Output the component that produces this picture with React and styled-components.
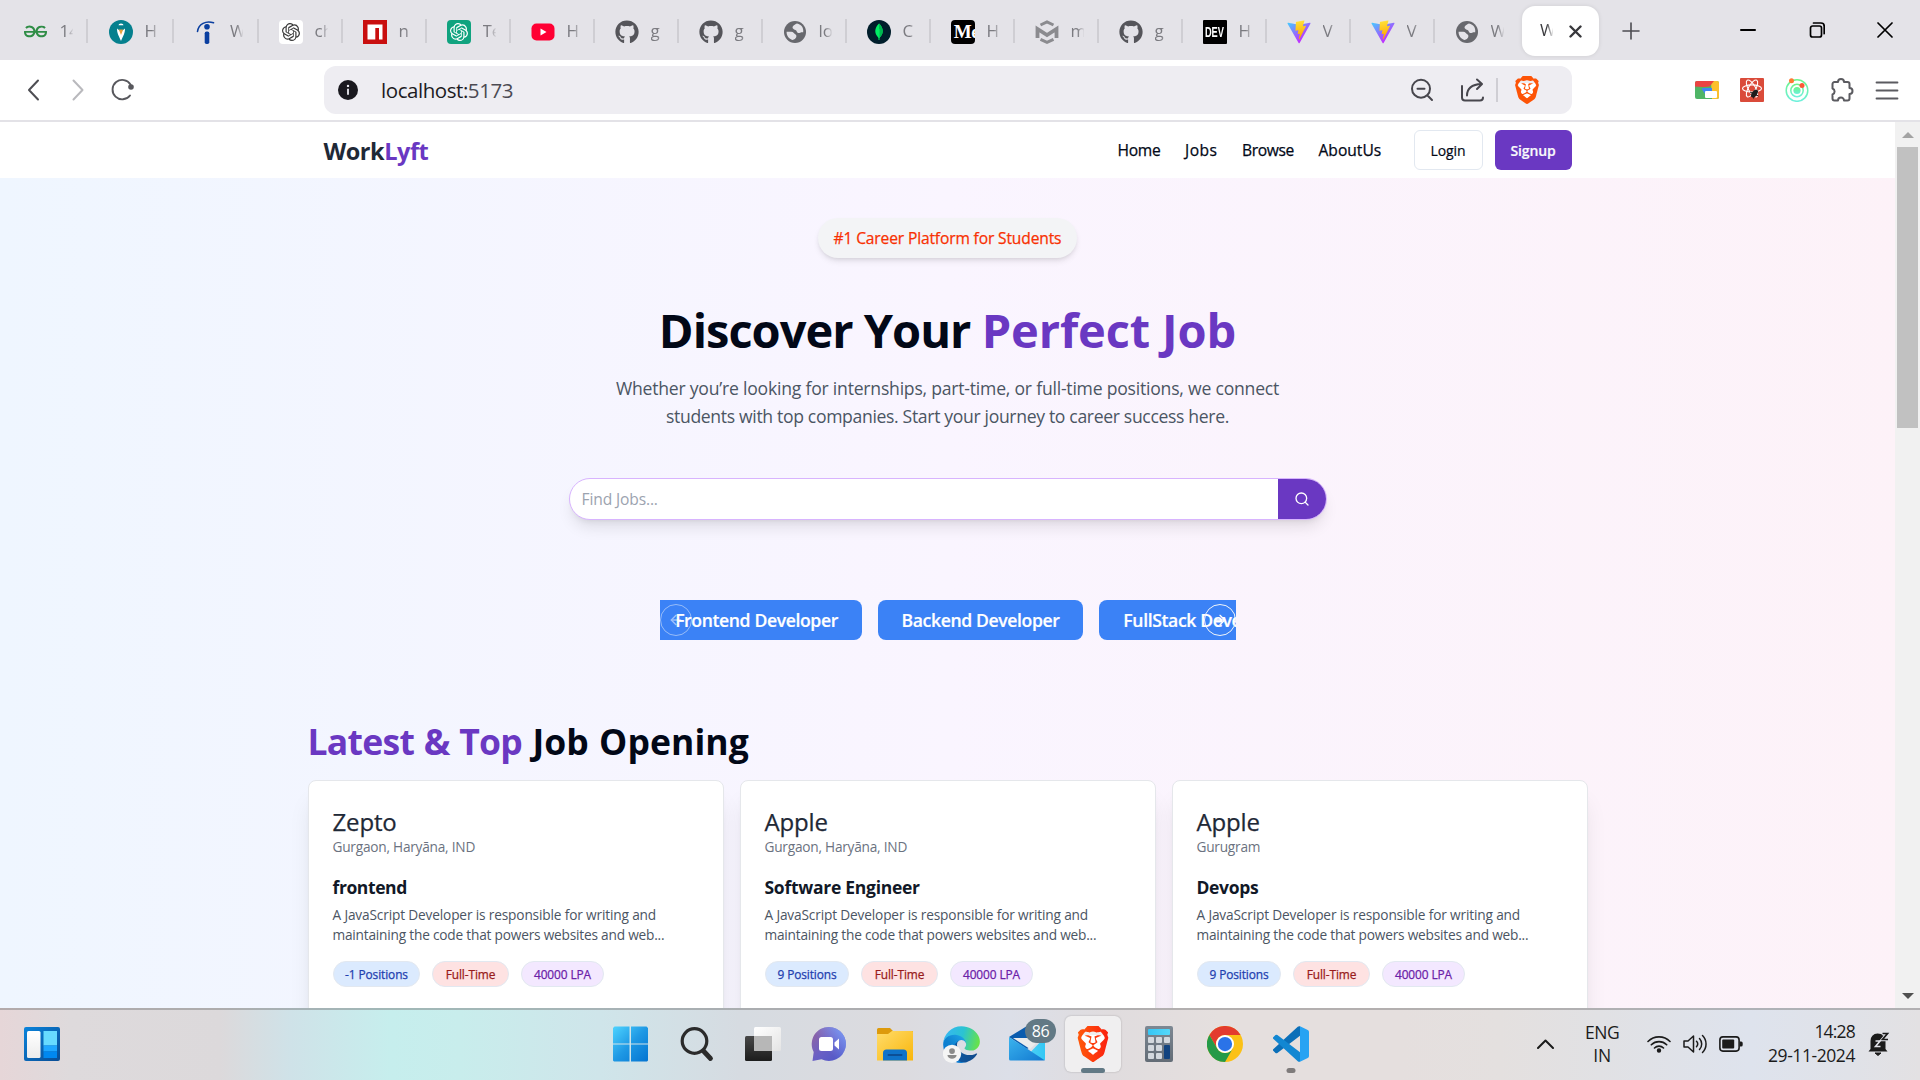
import React from 'react';
import styled, { createGlobalStyle } from 'styled-components';
import { SiGeeksforgeeks, SiOpenai, SiBrave } from 'react-icons/si';
import { FaGithub } from 'react-icons/fa6';
import { Search, ArrowLeft, ArrowRight } from 'lucide-react';

const PURPLE = '#6a38c2';

const GlobalStyle = createGlobalStyle`
  *, *::before, *::after { box-sizing: border-box; }
  html, body { margin: 0; padding: 0; overflow: hidden; }
  body { font-family: 'Open Sans', 'Noto Sans', sans-serif; color: #020817; }
  h1, h2, h3, p { margin: 0; font-weight: inherit; }
  button { font-family: inherit; padding: 0; margin: 0; cursor: pointer; }
  svg { display: block; flex: none; }
`;

const Screen = styled.div`
  width: 1920px;
  height: 1080px;
  display: flex;
  flex-direction: column;
  overflow: hidden;
  background: #fff;
`;

/* ---------- browser chrome ---------- */

const TabStrip = styled.div`
  height: 60px;
  flex: none;
  display: flex;
  align-items: flex-start;
  padding: 6px 0 0 4px;
  background: #e4e3e8;
`;

const Tab = styled.div`
  width: ${(p) => p.$w || 84}px;
  height: 51px;
  flex: none;
  display: flex;
  align-items: center;
  padding-left: ${(p) => (p.$w ? 20.5 : 19.5)}px;
`;

const TabIcon = styled.div`
  width: 24px;
  height: 24px;
  display: flex;
  align-items: center;
  justify-content: center;
  flex: none;
  overflow: hidden;
  white-space: nowrap;
  border-radius: ${(p) => p.$radius || 0}px;
  background: ${(p) => p.$bg || 'transparent'};
  color: ${(p) => p.$color || '#55555a'};
`;

const TabLabel = styled.span`
  width: 13px;
  margin-left: 12px;
  padding-bottom: 2px;
  overflow: hidden;
  white-space: nowrap;
  font-size: 17px;
  line-height: 24px;
  font-weight: 400;
  color: ${(p) => (p.$active ? '#3c3c40' : '#7b7b80')};
  mask-image: linear-gradient(to right, #000 50%, transparent 105%);
`;

const TabDivider = styled.span`
  width: 2px;
  height: 24px;
  margin-left: auto;
  margin-bottom: 2px;
  background: #cfced3;
`;

const ActiveTab = styled.div`
  width: 77px;
  height: 50px;
  flex: none;
  margin-left: 3px;
  padding: 0 17px 0 6px;
  display: flex;
  align-items: center;
  justify-content: space-between;
  background: #fff;
  border-radius: 13px;
  box-shadow: 0 0 4px rgba(0, 0, 0, 0.1);
`;

const MediumMark = styled.span`
  font: 700 19px/24px 'Liberation Serif', serif;
  letter-spacing: -0.5px;
  margin-left: 8px;
`;

const DevMark = styled.span`
  font: 700 14px/24px 'Liberation Sans', sans-serif;
  transform: scaleX(0.66);
`;

const WindowControls = styled.div`
  display: flex;
  align-items: center;
  height: 48px;
  margin-left: auto;
  padding-right: 27px;
  gap: 52.5px;
`;

const NewTab = styled.div`
  margin: 14px 0 0 21px;
  padding: 2px;
`;

const Toolbar = styled.div`
  height: 62px;
  flex: none;
  display: flex;
  align-items: center;
  background: #fff;
  border-bottom: 2px solid #e3e2e7;
`;

const NavButtons = styled.div`
  width: 324px;
  display: flex;
  align-items: center;
  padding-left: 22px;
  gap: 20px;
`;

const AddressBar = styled.div`
  width: 1248px;
  height: 48px;
  display: flex;
  align-items: center;
  padding: 0 31px 0 14px;
  border-radius: 12px;
  background: #eeedf2;
`;

const Address = styled.span`
  margin-left: 23px;
  padding-bottom: 1px;
  font-size: 20.5px;
  line-height: 28px;
  letter-spacing: -0.44px;
  color: #1c1b22;

  span { color: #4b4a52; }
`;

const AddressActions = styled.div`
  margin-left: auto;
  display: flex;
  align-items: center;
`;

const AddressDivider = styled.span`
  width: 2px;
  height: 24px;
  margin: 0 15px 0 12px;
  background: #cfced4;
`;

const ShareSlot = styled.div`
  margin-left: 26px;
`;

const Extensions = styled.div`
  margin-left: auto;
  padding-right: 21px;
  display: flex;
  align-items: center;
  gap: 21px;
`;

/* ---------- page ---------- */

const Viewport = styled.div`
  height: 886px;
  flex: none;
  display: flex;
  overflow: hidden;
`;

const Page = styled.div`
  width: 1895px;
  height: 886px;
  overflow: hidden;
  background: linear-gradient(to right, #eff6ff, #faf5ff, #fdf2f8);
`;

const Scrollbar = styled.div`
  width: 25px;
  display: flex;
  flex-direction: column;
  align-items: center;
  padding: 10px 0 9px;
  background: #f1f1f1;
`;

const Thumb = styled.div`
  width: 21px;
  height: 281px;
  margin: 9px 0 auto;
  background: #c1c1c1;
`;

const Header = styled.header`
  height: 56px;
  background: #fff;
`;

const HeaderInner = styled.div`
  width: 1248px;
  height: 56px;
  margin: 0 auto;
  display: flex;
  align-items: center;
`;

const Logo = styled.div`
  padding-top: 2px;
  font-size: 23.5px;
  line-height: 32px;
  font-weight: 700;
  letter-spacing: -0.46px;
  color: #1f2937;
`;

const Accent = styled.span`
  color: ${PURPLE};
  letter-spacing: ${(p) => (p.$ls === undefined ? 'inherit' : `${p.$ls}px`)};
`;

const Menu = styled.nav`
  margin-left: auto;
  display: flex;
  gap: 24px;
  font-size: 15.6px;
  line-height: 24px;
  font-weight: 500;
  -webkit-text-stroke: 0.25px currentColor;
`;

const MenuItem = styled.span`
  width: ${(p) => p.$w}px;
  white-space: nowrap;
  letter-spacing: ${(p) => p.$ls || 0}px;
`;

const AuthButton = styled.button`
  height: 40px;
  width: ${(p) => (p.$primary ? 77 : 69)}px;
  margin-left: ${(p) => (p.$primary ? 12 : 32)}px;
  border-radius: 6px;
  border: ${(p) => (p.$primary ? 'none' : '1px solid #e2e8f0')};
  background: ${(p) => (p.$primary ? PURPLE : '#fff')};
  color: ${(p) => (p.$primary ? '#f8fafc' : '#020817')};
  font-size: 14px;
  font-weight: ${(p) => (p.$primary ? 600 : 500)};
  letter-spacing: -0.12px;
  -webkit-text-stroke: 0.2px currentColor;
`;

const Hero = styled.section`
  display: flex;
  flex-direction: column;
  align-items: center;
  padding-top: 40px;
`;

const Badge = styled.span`
  width: 259px;
  height: 40px;
  border-radius: 20px;
  background: #f3f4f6;
  color: #f83002;
  font-size: 15.6px;
  line-height: 41px;
  font-weight: 500;
  letter-spacing: -0.15px;
  -webkit-text-stroke: 0.25px currentColor;
  text-align: center;
  box-shadow: 0 4px 6px -1px rgba(0, 0, 0, 0.1), 0 2px 4px -2px rgba(0, 0, 0, 0.1);
`;

const HeroTitle = styled.h1`
  margin-top: 48px;
  font-size: 47px;
  line-height: 48px;
  font-weight: 700;
  letter-spacing: -0.99px;
`;

const HeroText = styled.p`
  margin-top: 20px;
  display: flex;
  flex-direction: column;
  align-items: center;
  font-size: 17.6px;
  line-height: 28px;
  color: #4b5563;
`;

const Line = styled.span`
  white-space: nowrap;
  letter-spacing: ${(p) => p.$ls}px;
`;

const SearchBar = styled.div`
  width: 758px;
  height: 42px;
  margin-top: 48px;
  display: flex;
  align-items: stretch;
  overflow: hidden;
  border: 1px solid #d8b4fe;
  border-radius: 21px;
  background: #fff;
  box-shadow: 0 10px 15px -3px rgba(0, 0, 0, 0.1), 0 4px 6px -4px rgba(0, 0, 0, 0.1);
`;

const Placeholder = styled.span`
  flex: 1;
  padding-left: 12px;
  font-size: 15.6px;
  line-height: 41px;
  letter-spacing: -0.14px;
  color: #9ca3af;
`;

const SearchButton = styled.button`
  width: 48px;
  display: flex;
  align-items: center;
  justify-content: center;
  border: 0;
  background: ${PURPLE};
  color: #fff;
`;

const Carousel = styled.div`
  position: relative;
  width: 576px;
  height: 40px;
  margin-top: 80px;
  overflow: hidden;
`;

const CarouselTrack = styled.div`
  display: flex;
  gap: 16px;
  margin-left: -9px;
`;

const Category = styled.button`
  width: ${(p) => p.$w}px;
  height: 40px;
  flex: none;
  padding: 0 0 1px 1px;
  border: 0;
  border-radius: 8px;
  background: #3b82f6;
  color: #fff;
  font-size: 17.6px;
  font-weight: 600;
  letter-spacing: -0.38px;
  -webkit-text-stroke: 0.2px currentColor;
  white-space: nowrap;
`;

const CarouselArrow = styled.button`
  position: absolute;
  top: 4px;
  ${(p) => p.$side}: 0;
  width: 32px;
  height: 32px;
  display: flex;
  align-items: center;
  justify-content: center;
  border: 1px solid #f1f5f9;
  border-radius: 50%;
  background: transparent;
  color: #fff;
  opacity: ${(p) => (p.$disabled ? 0.5 : 1)};
`;

const Jobs = styled.section`
  width: 1280px;
  margin: 81px auto 0;
`;

const JobsTitle = styled.h2`
  font-size: 35.5px;
  line-height: 40px;
  font-weight: 700;
  letter-spacing: 0.07px;
  word-spacing: 1px;
`;

const JobGrid = styled.div`
  display: grid;
  grid-template-columns: repeat(3, 1fr);
  gap: 16px;
  margin-top: 19px;
`;

const Card = styled.article`
  height: 270px;
  padding: 25px 24px;
  border: 1px solid #e5e7eb;
  border-radius: 8px;
  background: #fff;
  box-shadow: 0 20px 25px -5px rgba(0, 0, 0, 0.1), 0 8px 10px -6px rgba(0, 0, 0, 0.1);
`;

const Company = styled.h3`
  font-size: 24px;
  line-height: 32px;
  font-weight: 500;
  letter-spacing: -0.15px;
  color: #1f2937;
  -webkit-text-stroke: 0.25px currentColor;
`;

const Place = styled.p`
  font-size: 13.7px;
  line-height: 18px;
  letter-spacing: -0.24px;
  color: #6b7280;
`;

const Role = styled.h3`
  margin-top: 17px;
  font-size: 17.5px;
  line-height: 28px;
  font-weight: 700;
  letter-spacing: ${(p) => p.$ls}px;
  color: #111827;
`;

const Summary = styled.p`
  margin-top: 4px;
  display: flex;
  flex-direction: column;
  font-size: 13.7px;
  line-height: 20px;
  color: #4b5563;
`;

const Tags = styled.div`
  display: flex;
  gap: 12px;
  margin-top: 16px;
`;

const tones = {
  blue: ['#dbeafe', '#1e40af'],
  red: ['#fee2e2', '#991b1b'],
  purple: ['#f3e8ff', '#6b21a8'],
};

const Tag = styled.span`
  width: ${(p) => p.$w}px;
  height: 26px;
  padding-left: 1px;
  border: 1px solid #e2e8f0;
  border-radius: 13px;
  background: ${(p) => tones[p.$tone][0]};
  color: ${(p) => tones[p.$tone][1]};
  font-size: 11.9px;
  line-height: 25px;
  font-weight: 500;
  letter-spacing: -0.1px;
  -webkit-text-stroke: 0.25px currentColor;
  text-align: center;
  white-space: nowrap;
`;

/* ---------- taskbar ---------- */

const Taskbar = styled.div`
  height: 72px;
  flex: none;
  display: flex;
  align-items: center;
  border-top: 2px solid rgba(110, 110, 110, 0.42);
  background: linear-gradient(
    to right,
    #e6d6d8 0, #dedadc 70px, #dcd9db 220px, #cfe2e8 290px, #c6eeed 390px, #c8edec 460px,
    #cfe5ea 600px, #d6dbe1 740px, #dcdbdf 900px, #dcdfe8 1010px, #e0dcde 1110px, #e5dfde 1220px,
    #e5dfde 1400px, #e4e0df 1500px, #e1e1e4 1600px, #dee3ed 1750px, #e0e2e8 1850px, #e3e1e3 1920px
  );
  background-clip: border-box;
`;

const WidgetArea = styled.div`
  width: 598px;
  padding: 0 0 2px 24px;
`;

const AppSlot = styled.div`
  position: relative;
  width: 66px;
  height: 70px;
  padding-bottom: 2px;
  display: flex;
  align-items: center;
  justify-content: center;
  flex: none;
`;

const AppTile = styled.div`
  width: 56px;
  height: 56px;
  display: flex;
  align-items: center;
  justify-content: center;
  border-radius: 6px;
  background: #f0eff0;
  box-shadow: 0 0 2px rgba(0, 0, 0, 0.25);
`;

const Running = styled.span`
  position: absolute;
  bottom: 7px;
  left: 50%;
  width: ${(p) => p.$w}px;
  height: 5px;
  border-radius: 3px;
  transform: translateX(-50%);
  background: ${(p) => p.$color};
`;

const Count = styled.span`
  position: absolute;
  top: 9px;
  left: 31px;
  width: 31px;
  height: 24px;
  border-radius: 12px;
  background: #627985;
  color: #fff;
  font-size: 16px;
  line-height: 24px;
  letter-spacing: -0.3px;
  text-align: center;
`;

const Tray = styled.div`
  flex: 1;
  display: flex;
  align-items: center;
  padding: 0 30px 2px 0;
  color: #1b1b1b;
`;

const TrayStack = styled.div`
  display: flex;
  flex-direction: column;
  align-items: ${(p) => p.$align || 'center'};
  padding-bottom: ${(p) => (p.$align ? 2 : 0)}px;
  font-size: 17.5px;
  line-height: ${(p) => (p.$align ? 24 : 23)}px;
  white-space: nowrap;
`;

const Status = styled.div`
  display: flex;
  gap: 12px;
  align-items: center;
  margin-left: 28px;
`;

const Spacer = styled.span`
  width: ${(p) => p.$w}px;
  flex: none;
`;

const Push = styled.span`
  margin-left: auto;
`;

/* ---------- icons ---------- */

const Globe = () => (
  <svg width="24" height="24" viewBox="0 0 24 24">
    <circle cx="12" cy="12" r="11" fill="#67686d" />
    <path d="M14 3.600C10.500 5 8.800 7 10 8.600c1 1.400 2.400 1 3.200 1.900.9 1 .5 2.200 2 2.400 1.600.2 2.400-1 5-.7C20.800 8 18.500 4.600 14 3.600Z" fill="#e4e3e8" />
    <path d="M3.600 11.800h4.600c2.400 0 2.600 1.900 4 2.500 2.300 1 1.200 4.900-2.600 5.800C6 19 3.400 15.800 3.600 11.800Z" fill="#e4e3e8" />
  </svg>
);

const Pen = () => (
  <svg width="24" height="24" viewBox="0 0 24 24">
    <circle cx="12" cy="12" r="12" fill="#05808e" />
    <path d="M9.500 5.200a2.500 1.800 0 0 1 5 0z" fill="#fff" />
    <path d="M8 8.500c0 5 1.500 6.500 4 12.500 2.500-6 4-7.500 4-12.500l-2.500 2h-3z" fill="#fff" />
    <path d="M9.800 9.500h4.400L12 15z" fill="#e8a33d" />
  </svg>
);

const Indeed = () => (
  <svg width="24" height="24" viewBox="0 0 24 24">
    <path d="M3.500 11.500C4.500 4 12 .2 19.500 2.800" fill="none" stroke="#0a3fa0" strokeWidth="1.600" strokeLinecap="round" />
    <circle cx="13" cy="6.800" r="2.800" fill="#0a3fa0" />
    <rect x="10.700" y="11.500" width="4.600" height="12.500" rx="1.800" fill="#0a3fa0" />
  </svg>
);

const Npm = () => (
  <svg width="24" height="24" viewBox="0 0 24 24">
    <rect width="24" height="24" fill="#c90f0f" />
    <path d="M4.500 4.500h15v15H16V8h-3.700v11.500H4.500z" fill="#fff" />
  </svg>
);

const YouTube = () => (
  <svg width="24" height="24" viewBox="0 0 24 24">
    <rect x="0.500" y="3.500" width="23" height="17" rx="5" fill="#ff0033" />
    <path d="M9.500 8.500v7l6-3.500z" fill="#fff" />
  </svg>
);

const Mongo = () => (
  <svg width="24" height="24" viewBox="0 0 24 24">
    <circle cx="12" cy="12" r="12" fill="#001e2b" />
    <path d="M12 3.500c5 4.800 5 10.500 0 14.700C7 14 7 8.300 12 3.500Z" fill="#00ed64" />
    <path d="M12 3.500c5 4.800 5 10.500 0 14.700z" fill="#00b850" />
    <path d="M12 9v11" stroke="#00ed64" strokeWidth="1" />
  </svg>
);

const CubeM = () => (
  <svg width="24" height="24" viewBox="0 0 24 24" fill="none" stroke="#8b8b8f" strokeWidth="3.800">
    <path d="M2.500 18V9l9.500 6 9.500-6v9" />
    <path d="M5.500 5 12 2l6.500 3M5.500 19.300l6.500 3 6.500-3" strokeWidth="3" />
  </svg>
);

const Vite = () => (
  <svg width="24" height="24" viewBox="0 0 410 404">
    <defs>
      <linearGradient id="viteA" x1="6" y1="33" x2="235" y2="344" gradientUnits="userSpaceOnUse">
        <stop stopColor="#41d1ff" /><stop offset="1" stopColor="#bd34fe" />
      </linearGradient>
      <linearGradient id="viteB" x1="194.600" y1="8.800" x2="236" y2="293" gradientUnits="userSpaceOnUse">
        <stop stopColor="#ffea83" /><stop offset=".083" stopColor="#ffdd35" /><stop offset="1" stopColor="#ffa800" />
      </linearGradient>
    </defs>
    <path fill="url(#viteA)" d="M399.641 59.525L215.643 388.545c-3.800 6.793-13.560 6.833-17.415.073L10.582 59.556C6.381 52.190 12.680 43.267 21.028 44.759l184.195 32.923c1.175.21 2.378.208 3.553-.006L389.119 44.806c8.320-1.517 14.649 7.337 10.522 14.719Z" />
    <path fill="url(#viteB)" d="M292.965 1.574L156.801 28.255a5 5 0 0 0-4.030 4.611l-8.376 141.464a5 5 0 0 0 6.115 5.168l37.910-8.749a5 5 0 0 1 6.023 5.873l-11.263 55.153a5 5 0 0 0 6.352 5.785l23.415-7.114a5 5 0 0 1 6.350 5.796l-17.899 86.633c-1.120 5.419 6.088 8.374 9.094 3.728l2.008-3.103L323.454 102.072a5 5 0 0 0-5.418-7.149l-39.022 7.531a5 5 0 0 1-5.752-6.296l25.469-88.291a5 5 0 0 0-5.766-6.293Z" />
  </svg>
);

const Stroke = ({ w, h, d, color = '#55555a', width = 2 }) => (
  <svg width={w} height={h} viewBox={`0 0 ${w} ${h}`} fill="none" stroke={color} strokeWidth={width} strokeLinecap="round" strokeLinejoin="round">
    <path d={d} />
  </svg>
);

const Reload = () => (
  <svg width="24" height="24" viewBox="0 0 24 24">
    <path d="M20.500 6.500A9.700 9.700 0 1 0 20 17.500" fill="none" stroke="#58585d" strokeWidth="1.900" strokeLinecap="round" />
    <circle cx="21" cy="9" r="2.800" fill="#58585d" />
  </svg>
);

const Info = () => (
  <svg width="20" height="20" viewBox="0 0 20 20">
    <circle cx="10" cy="10" r="10" fill="#1a191f" />
    <path d="M10 8.800v6" stroke="#eeedf2" strokeWidth="1.800" />
    <circle cx="10" cy="5.900" r="1.200" fill="#eeedf2" />
  </svg>
);

const BraveLogo = ({ size, id, from, to }) => (
  <svg width={size} height={size} viewBox="0 0 24 24">
    <defs>
      <linearGradient id={id}><stop stopColor={from} /><stop offset="1" stopColor={to} /></linearGradient>
    </defs>
    <path d="M4.500 6h15l-1.500 11-6 4.500L6 17z" fill="#fff" />
    <SiBrave x="0" y="0" size={24} fill={`url(#${id})`} />
  </svg>
);

const ColorSheet = () => (
  <svg width="24" height="18" viewBox="0 0 24 18">
    <rect width="24" height="18" rx="2" fill="#4fb566" />
    <path d="M16 0h6a2 2 0 0 1 2 2v14a2 2 0 0 1-2 2h-5z" fill="#fbc02d" />
    <path d="M6 7h11v6H10z" fill="#4285f4" />
    <path d="M2 0h17l-4.500 5.500L0 7V2a2 2 0 0 1 2-2z" fill="#eb4343" />
    <path d="M0 5.500V7l5 5 3-6z" fill="#4fb566" opacity=".9" />
    <rect x="10" y="10" width="12" height="7" rx="1" fill="#fff" />
  </svg>
);

const ReactBug = () => (
  <svg width="24" height="24" viewBox="0 0 24 24">
    <rect width="24" height="24" rx="1" fill="#da4b3a" />
    <g fill="none" stroke="#fff" strokeWidth="1.100">
      <ellipse cx="12" cy="10.500" rx="9.500" ry="3.600" />
      <ellipse cx="12" cy="10.500" rx="9.500" ry="3.600" transform="rotate(60 12 10.500)" />
      <ellipse cx="12" cy="10.500" rx="9.500" ry="3.600" transform="rotate(120 12 10.500)" />
    </g>
    <ellipse cx="14.500" cy="15.500" rx="2.600" ry="4.500" transform="rotate(35 14.500 15.500)" fill="#1c1c1c" />
    <path d="m10 14 8.500 4M11.500 18.500l6.500-5.500M13.500 20.500l1-7" stroke="#1c1c1c" strokeWidth="1" />
  </svg>
);

const Orbit = () => (
  <svg width="24" height="24" viewBox="0 0 24 24" fill="none" strokeWidth="1.500">
    <defs>
      <linearGradient id="orbit" x2="0" y2="1"><stop stopColor="#6cf58a" /><stop offset="1" stopColor="#6ff0dc" /></linearGradient>
    </defs>
    <circle cx="12" cy="12.500" r="10.800" stroke="url(#orbit)" />
    <circle cx="12" cy="12.500" r="6.200" stroke="url(#orbit)" />
    <circle cx="12" cy="12.500" r="3.600" fill="url(#orbit)" />
    <circle cx="6.500" cy="2.700" r="2.500" fill="#ff7a33" />
    <circle cx="17" cy="7.500" r="2.500" fill="#fb5a35" />
  </svg>
);

const Widgets = () => (
  <svg width="36" height="34" viewBox="0 0 36 34">
    <defs>
      <linearGradient id="wid" x2="1" y2="1"><stop stopColor="#0a84dc" /><stop offset="1" stopColor="#0a4c94" /></linearGradient>
      <linearGradient id="widw" x2="0" y2="1"><stop stopColor="#fff" /><stop offset="1" stopColor="#ececec" /></linearGradient>
    </defs>
    <rect width="36" height="34" rx="2" fill="url(#wid)" />
    <rect x="3" y="4" width="13.500" height="27" rx="1.500" fill="url(#widw)" />
    <rect x="19.500" y="4" width="13.500" height="14.500" fill="#67dbff" />
    <rect x="19.500" y="18.500" width="13.500" height="6" fill="#1fa7ff" />
    <rect x="19.500" y="24.500" width="13.500" height="6.500" fill="#0088f0" />
  </svg>
);

const Start = () => (
  <svg width="36" height="36" viewBox="0 0 36 36">
    <defs>
      <linearGradient id="win" gradientUnits="userSpaceOnUse" x1="0" y1="0" x2="36" y2="36">
        <stop stopColor="#4fd4ff" /><stop offset=".5" stopColor="#1e98e4" /><stop offset="1" stopColor="#0272d0" />
      </linearGradient>
    </defs>
    <path fill="url(#win)" d="M1.500 .5h15v17H0V2zM18 .5h15.500L35 2v15.500H18zM0 18.500h16.500v17H1L0 34.500zM18 18.500h17v16l-1 1H18z" />
  </svg>
);

const SearchGlass = () => (
  <svg width="34" height="36" viewBox="0 0 34 36" fill="none" stroke="#2b2b2b">
    <circle cx="14.500" cy="15" r="12.300" strokeWidth="3.200" />
    <path d="m23.500 25 7 7.500" strokeWidth="4.800" strokeLinecap="round" />
  </svg>
);

const TaskView = () => (
  <svg width="36" height="36" viewBox="0 0 36 36">
    <defs>
      <linearGradient id="tvd" x2="0" y2="1"><stop stopColor="#484848" /><stop offset="1" stopColor="#1c1c1c" /></linearGradient>
      <linearGradient id="tvl" x2="1" y2="1"><stop stopColor="#fff" /><stop offset="1" stopColor="#e4e4e4" /></linearGradient>
    </defs>
    <rect x="0" y="10" width="27" height="25" rx="1.500" fill="url(#tvd)" />
    <rect x="9" y="1" width="27" height="24" rx="1.500" fill="url(#tvl)" />
    <path d="M9 10h18v15H10.500A1.500 1.500 0 0 1 9 23.500z" fill="#b7b7b7" />
  </svg>
);

const Chat = () => (
  <svg width="36" height="36" viewBox="0 0 36 36">
    <defs>
      <linearGradient id="chat" x1="0" y1=".2" x2=".8" y2="1"><stop stopColor="#8f63a4" /><stop offset=".5" stopColor="#6a5fc4" /><stop offset="1" stopColor="#5058c8" /></linearGradient>
      <linearGradient id="chat2" x1=".4" y1=".6" x2="1" y2=".1"><stop stopColor="#7b8ff0" stopOpacity="0" /><stop offset="1" stopColor="#7ba0f8" /></linearGradient>
    </defs>
    <path d="M18 1a17 17 0 1 1-7.500 32.300L1.500 35l1.200-9A17 17 0 0 1 18 1z" fill="url(#chat)" />
    <path d="M18 1a17 17 0 1 1-7.500 32.300L1.500 35l1.200-9A17 17 0 0 1 18 1z" fill="url(#chat2)" />
    <rect x="8" y="11" width="14" height="14" rx="2.500" fill="#fff" />
    <path d="M23.500 16.500 28 12.500v11l-4.500-4z" fill="#fff" />
  </svg>
);

const Folder = () => (
  <svg width="36" height="36" viewBox="0 0 36 36">
    <defs>
      <linearGradient id="fol" x2="1" y2="1"><stop stopColor="#ffdc6b" /><stop offset="1" stopColor="#f9b60b" /></linearGradient>
    </defs>
    <path d="M1.500 2H13l3 3h20v6H0V3.500A1.500 1.500 0 0 1 1.500 2z" fill="#dd9a0c" />
    <path d="M0 8h11l4-3h20a1 1 0 0 1 1 1v28.500H0z" fill="url(#fol)" />
    <path d="M6 34.500V27a3.500 3.500 0 0 1 3.500-3.500h17A3.500 3.500 0 0 1 30 27v7.500z" fill="#0f73c9" />
    <rect x="10.500" y="28" width="15" height="2" rx="1" fill="#0c4f96" />
  </svg>
);

const Edge = () => (
  <svg width="37" height="37" viewBox="-1 -1 258 258">
    <defs>
      <linearGradient id="ed1" x1="63" y1="177" x2="241" y2="177" gradientUnits="userSpaceOnUse"><stop stopColor="#0c59a4" /><stop offset="1" stopColor="#114a8b" /></linearGradient>
      <linearGradient id="ed2" x1="157" y1="107" x2="46" y2="228" gradientUnits="userSpaceOnUse"><stop stopColor="#1b9de2" /><stop offset=".5" stopColor="#0f82d0" /><stop offset="1" stopColor="#0678d4" /></linearGradient>
      <linearGradient id="ed3" x1="20" y1="60" x2="250" y2="120" gradientUnits="userSpaceOnUse"><stop stopColor="#35b8f0" /><stop offset=".5" stopColor="#2bc3d2" /><stop offset="1" stopColor="#66e24b" /></linearGradient>
    </defs>
    <g transform="translate(-4.600 -4.900)">
      <path fill="url(#ed1)" d="M235.680 195.460a93.730 93.730 0 0 1-10.540 4.710 101.870 101.870 0 0 1-35.900 6.460c-47.320 0-88.540-32.550-88.540-74.320a31.480 31.480 0 0 1 16.430-27.310c-42.800 1.800-53.800 46.400-53.800 72.530 0 73.880 68.090 81.370 82.760 81.370 7.910 0 19.840-2.300 27-4.560l1.310-.44a128.340 128.340 0 0 0 66.600-52.800 4 4 0 0 0-5.320-5.640z" />
      <path fill="url(#ed2)" d="M110.340 246.340A79.200 79.200 0 0 1 87.600 225a80.720 80.720 0 0 1 29.530-120c3.120-1.470 8.450-4.130 15.540-4a32.350 32.350 0 0 1 25.690 13 31.880 31.880 0 0 1 6.360 18.660c0-.21 24.460-79.600-80-79.600-43.900 0-80 41.660-80 78.210a130.150 130.150 0 0 0 12.110 56 128 128 0 0 0 156.380 67.110 75.550 75.550 0 0 1-62.780-8z" />
      <path fill="url(#ed3)" d="M156.940 153.780c-.81 1.050-3.300 2.500-3.300 5.660 0 2.610 1.700 5.120 4.720 7.230 14.380 10 41.490 8.680 41.560 8.680a59.560 59.560 0 0 0 30.270-8.350 61.380 61.380 0 0 0 30.430-52.880c.26-22.410-8-37.310-11.340-43.910C228.090 28.760 182.350 4.920 132.610 4.920a128 128 0 0 0-128 126.200c.48-36.540 36.800-66.050 80-66.050 3.500 0 23.460.34 42 10.070 16.340 8.580 24.900 18.940 30.850 29.210 6.180 10.670 7.280 24.150 7.280 29.520s-2.740 13.330-7.800 19.910z" />
    </g>
    <circle cx="62" cy="193" r="64" fill="#f5f5f5" />
    <circle cx="62" cy="174" r="20" fill="#8a8a8a" />
    <path d="M30 202h64c0 34-64 34-64 0z" fill="#8a8a8a" />
  </svg>
);

const Mail = () => (
  <svg width="36" height="36" viewBox="0 0 36 36">
    <defs>
      <linearGradient id="ml" x2="1" y2="1"><stop stopColor="#3bb4ee" /><stop offset="1" stopColor="#1178d0" /></linearGradient>
      <linearGradient id="mr" x1="1" x2="0"><stop stopColor="#33c7f5" /><stop offset="1" stopColor="#55d4f5" /></linearGradient>
    </defs>
    <path d="M0 11 18 0l18 11-18 12z" fill="#0b5cae" />
    <path d="M4 12h29l-12 11z" fill="#ececec" />
    <path d="M36 11v23H14z" fill="url(#mr)" />
    <path d="M0 11l36 23.500H1.500A1.500 1.500 0 0 1 0 33z" fill="url(#ml)" />
  </svg>
);

const Calculator = () => (
  <svg width="28" height="36" viewBox="0 0 28 36">
    <defs>
      <linearGradient id="calc" x2="0" y2="1"><stop stopColor="#7d8893" /><stop offset="1" stopColor="#636c76" /></linearGradient>
      <linearGradient id="calcs"><stop stopColor="#35c6f4" /><stop offset="1" stopColor="#55d8fa" /></linearGradient>
    </defs>
    <rect width="28" height="36" rx="2" fill="url(#calc)" />
    <rect x="3" y="3" width="22" height="6" rx="1" fill="url(#calcs)" />
    <g fill="#d3d8de">
      {[3, 11, 19].map((x) => <rect key={x} x={x} y="11" width="6" height="6" rx="1" />)}
      {[3, 11].map((x) => <rect key={x} x={x} y="19" width="6" height="6" rx="1" />)}
      {[3, 11].map((x) => <rect key={x} x={x} y="27" width="6" height="6" rx="1" />)}
    </g>
    <rect x="19" y="19" width="6" height="14" rx="1" fill="#12437f" />
  </svg>
);

const Chrome = () => (
  <svg width="36" height="36" viewBox="0 0 48 48">
    <circle cx="24" cy="24" r="24" fill="#fbc116" />
    <path d="M3.200 12A24 24 0 0 1 44.800 12H24a12 12 0 0 0-10.400 18z" fill="#e33b2e" />
    <path d="M3.200 12A24 24 0 0 0 24 48l10.400-18a12 12 0 0 1-20.800 0z" fill="#249a48" />
    <circle cx="24" cy="24" r="12" fill="#fff" />
    <circle cx="24" cy="24" r="9.500" fill="#2a73e8" />
  </svg>
);

const VsCode = () => (
  <svg width="36" height="36" viewBox="0 0 24 24">
    <path d="M.33 15.260a1 1 0 0 0 0 1.480L1.650 17.940a1 1 0 0 0 1.280.060L18 6.550V.2a1.500 1.500 0 0 0-1.500.3z" fill="#0b6fb8" />
    <path d="M.33 8.740a1 1 0 0 1 0-1.480L1.650 6.060A1 1 0 0 1 2.930 6L18 17.450v6.350a1.500 1.500 0 0 1-1.500-.3z" fill="#1287d2" />
    <path d="M18 .12 L23.150 2.590A1.500 1.500 0 0 1 24 3.940v16.120a1.500 1.500 0 0 1-.85 1.350L18 23.880z" fill="#27a3f3" />
  </svg>
);

const Wifi = () => (
  <svg width="24" height="18" viewBox="0 0 24 18" fill="none" stroke="#1b1b1b" strokeWidth="1.600" strokeLinecap="round">
    <path d="M1 6.500a15.500 15.500 0 0 1 22 0M4.300 9.800a10.900 10.900 0 0 1 15.400 0M7.500 13a6.400 6.400 0 0 1 9 0" />
    <circle cx="12" cy="15.500" r="1.400" fill="#1b1b1b" />
  </svg>
);

const Speaker = () => (
  <svg width="24" height="20" viewBox="0 0 24 20" fill="none" stroke="#1b1b1b" strokeWidth="1.500" strokeLinecap="round" strokeLinejoin="round">
    <path d="M1 7v6h4l5.500 5V2L5 7zM13.500 7.300a4 4 0 0 1 0 5.400M16.500 4.500a8 8 0 0 1 0 11M19.500 1.500a12 12 0 0 1 0 17" />
  </svg>
);

const Battery = () => (
  <svg width="24" height="16" viewBox="0 0 24 16">
    <rect x=".9" y=".9" width="19.200" height="14.200" rx="3" fill="none" stroke="#1b1b1b" strokeWidth="1.600" />
    <rect x="3.200" y="3.600" width="12" height="8.800" rx="1" fill="#1b1b1b" />
    <path d="M20.800 5.500h1.400a1.500 1.500 0 0 1 1.500 1.500v2a1.500 1.500 0 0 1-1.500 1.500h-1.400z" fill="#1b1b1b" />
  </svg>
);

const Bell = () => (
  <svg width="22" height="24" viewBox="0 0 22 24">
    <path d="M2.500 17V9a7 7 0 0 1 7-7.500c5 0 8 3 8 7.500v8l2 2.500H.5z" fill="#1b1b1b" />
    <path d="M7 21h6l-3 2.500z" fill="#1b1b1b" stroke="#1b1b1b" strokeLinejoin="round" />
    <path d="M14 1.500h5.500l-5 6h5.500" fill="none" stroke="#e1e2e8" strokeWidth="3.400" />
    <path d="M14.500 1.500h5l-5 6h5.500" fill="none" stroke="#1b1b1b" strokeWidth="1.700" />
    <path d="M7.500 9h4.500l-4.500 5.500h5" fill="none" stroke="#e1e2e8" strokeWidth="1.600" />
  </svg>
);

/* ---------- data ---------- */

const tabs = [
  { label: '14', icon: <SiGeeksforgeeks size={23} />, color: '#2f8d46' },
  { label: 'H', icon: <Pen />, w: 85.5 },
  { label: 'W', icon: <Indeed />, w: 85.5 },
  { label: 'ch', icon: <SiOpenai size={18} />, color: '#3a3a3a', bg: '#fff', radius: 4 },
  { label: 'n', icon: <Npm /> },
  { label: 'Te', icon: <SiOpenai size={18} />, color: '#fff', bg: '#10a37f', radius: 4 },
  { label: 'H', icon: <YouTube /> },
  { label: 'g', icon: <FaGithub size={24} /> },
  { label: 'g', icon: <FaGithub size={24} /> },
  { label: 'lo', icon: <Globe /> },
  { label: 'C', icon: <Mongo /> },
  { label: 'H', icon: <MediumMark>Me</MediumMark>, color: '#fff', bg: '#000', radius: 4 },
  { label: 'm', icon: <CubeM /> },
  { label: 'g', icon: <FaGithub size={24} /> },
  { label: 'H', icon: <DevMark>DEV</DevMark>, color: '#fff', bg: '#000', radius: 1 },
  { label: 'V', icon: <Vite /> },
  { label: 'V', icon: <Vite /> },
  { label: 'W', icon: <Globe />, last: true },
];

const menu = [
  { label: 'Home', w: 43.5, ls: -0.28 },
  { label: 'Jobs', w: 33, ls: 0.5 },
  { label: 'Browse', w: 52.5, ls: -0.35 },
  { label: 'AboutUs', w: 63, ls: 0 },
];

const jobs = [
  { company: 'Zepto', place: 'Gurgaon, Haryāna, IND', role: 'frontend', ls: -0.4, positions: '-1 Positions', w: 87 },
  { company: 'Apple', place: 'Gurgaon, Haryāna, IND', role: 'Software Engineer', ls: -0.27, positions: '9 Positions', w: 84 },
  { company: 'Apple', place: 'Gurugram', role: 'Devops', ls: -0.35, positions: '9 Positions', w: 84 },
];

const apps = [
  <Start key="start" />,
  <SearchGlass key="search" />,
  <TaskView key="tasks" />,
  <Chat key="chat" />,
  <Folder key="files" />,
  <Edge key="edge" />,
  <React.Fragment key="mail"><Mail /><Count>86</Count></React.Fragment>,
  <React.Fragment key="brave">
    <AppTile><BraveLogo size={36} id="braveTask" from="#ff5a0a" to="#fb2010" /></AppTile>
    <Running $w={24} $color="#627985" />
  </React.Fragment>,
  <Calculator key="calc" />,
  <Chrome key="chrome" />,
  <React.Fragment key="code"><VsCode /><Running $w={9} $color="#7f7b7b" /></React.Fragment>,
];

export default function App() {
  return (
    <Screen>
      <GlobalStyle />
      <TabStrip>
        {tabs.map((t, i) => (
          <Tab key={i} $w={t.w}>
            <TabIcon $bg={t.bg} $color={t.color} $radius={t.radius}>{t.icon}</TabIcon>
            <TabLabel>{t.label}</TabLabel>
            {!t.last && <TabDivider />}
          </Tab>
        ))}
        <ActiveTab>
          <TabLabel $active>W</TabLabel>
          <Stroke w={13} h={13} d="M1.500 1.500l10 10M11.500 1.500l-10 10" color="#38383c" width={2.400} />
        </ActiveTab>
        <NewTab><Stroke w={18} h={18} d="M9 1v16M1 9h16" color="#4c4c51" width={1.600} /></NewTab>
        <WindowControls>
          <Stroke w={16} h={16} d="M1 8h14" color="#000" />
          <Stroke w={16} h={16} d="M3.500 4h7a2 2 0 0 1 2 2v7a2 2 0 0 1-2 2h-7a2 2 0 0 1-2-2V6a2 2 0 0 1 2-2zM4.500 1h7.500a3.200 3.200 0 0 1 3.200 3.200v7.500" color="#000" width={1.700} />
          <Stroke w={16} h={16} d="M1 1l14 14M15 1L1 15" color="#000" width={1.700} />
        </WindowControls>
      </TabStrip>

      <Toolbar>
        <NavButtons>
          <Stroke w={24} h={24} d="M16 2.500 7 12l9 9.500" color="#4e4e53" />
          <Stroke w={24} h={24} d="M7.500 2.500l9 9.500-9 9.500" color="#b9b9bd" />
          <Reload />
        </NavButtons>
        <AddressBar>
          <Info />
          <Address>localhost:<span>5173</span></Address>
          <AddressActions>
            <Stroke w={24} h={24} d="M11 1.700a9 9 0 1 1 0 18 9 9 0 0 1 0-18zM17.500 17.500l4.500 4.500M7.500 10.700h7" color="#47464d" />
            <ShareSlot>
              <Stroke w={24} h={24} d="M2 8v11.500a3 3 0 0 0 3 3h15a3 3 0 0 0 3-3M7 17.500c0-7 4-11 14.500-11.500M17 1.500 22 6l-5 5" color="#47464d" />
            </ShareSlot>
            <AddressDivider />
            <BraveLogo size={28} id="braveBar" from="#fd5407" to="#fd5407" />
          </AddressActions>
        </AddressBar>
        <Extensions>
          <ColorSheet />
          <ReactBug />
          <Orbit />
          <Stroke w={24} h={24} d="M2.500 8V6a2 2 0 0 1 2-2H8a3 3 0 0 1 6 0h3.500a2 2 0 0 1 2 2v4a3 3 0 0 1 0 6v4.500a2 2 0 0 1-2 2H14a3 3 0 0 0-6 0H4.500a2 2 0 0 1-2-2V16.500a3.200 3.200 0 0 0 0-6z" color="#5b5b60" />
          <Stroke w={24} h={24} d="M1.500 4.500h21M1.500 12.500h21M1.500 20.500h21" color="#5b5b60" width={1.800} />
        </Extensions>
      </Toolbar>

      <Viewport>
        <Page>
          <Header>
            <HeaderInner>
              <Logo>Work<Accent>Lyft</Accent></Logo>
              <Menu>
                {menu.map((m) => <MenuItem key={m.label} $w={m.w} $ls={m.ls}>{m.label}</MenuItem>)}
              </Menu>
              <AuthButton>Login</AuthButton>
              <AuthButton $primary>Signup</AuthButton>
            </HeaderInner>
          </Header>

          <Hero>
            <Badge>#1 Career Platform for Students</Badge>
            <HeroTitle>Discover Your <Accent $ls={-0.12}>Perfect Job</Accent></HeroTitle>
            <HeroText>
              <Line $ls={-0.22}>Whether you’re looking for internships, part-time, or full-time positions, we connect</Line>
              <Line $ls={-0.34}>students with top companies. Start your journey to career success here.</Line>
            </HeroText>
            <SearchBar>
              <Placeholder>Find Jobs...</Placeholder>
              <SearchButton><Search size={16} strokeWidth={2} /></SearchButton>
            </SearchBar>
            <Carousel>
              <CarouselTrack>
                <Category $w={211}>Frontend Developer</Category>
                <Category $w={205}>Backend Developer</Category>
                <Category $w={209}>FullStack Developer</Category>
              </CarouselTrack>
              <CarouselArrow $side="left" $disabled><ArrowLeft size={16} /></CarouselArrow>
              <CarouselArrow $side="right"><ArrowRight size={16} /></CarouselArrow>
            </Carousel>
          </Hero>

          <Jobs>
            <JobsTitle><Accent $ls={-0.7}>Latest &amp; Top</Accent> Job Opening</JobsTitle>
            <JobGrid>
              {jobs.map((j, i) => (
                <Card key={i}>
                  <Company>{j.company}</Company>
                  <Place>{j.place}</Place>
                  <Role $ls={j.ls}>{j.role}</Role>
                  <Summary>
                    <Line $ls={-0.16}>A JavaScript Developer is responsible for writing and</Line>
                    <Line $ls={-0.21}>maintaining the code that powers websites and web...</Line>
                  </Summary>
                  <Tags>
                    <Tag $tone="blue" $w={j.w}>{j.positions}</Tag>
                    <Tag $tone="red" $w={77}>Full-Time</Tag>
                    <Tag $tone="purple" $w={83}>40000 LPA</Tag>
                  </Tags>
                </Card>
              ))}
            </JobGrid>
          </Jobs>
        </Page>
        <Scrollbar>
          <svg width="12" height="6" viewBox="0 0 12 6"><path d="M6 0l6 6H0z" fill="#a3a3a3" /></svg>
          <Thumb />
          <svg width="12" height="6" viewBox="0 0 12 6"><path d="M0 0h12L6 6z" fill="#505050" /></svg>
        </Scrollbar>
      </Viewport>

      <Taskbar>
        <WidgetArea><Widgets /></WidgetArea>
        {apps.map((a, i) => <AppSlot key={i}>{a}</AppSlot>)}
        <Tray>
          <Spacer $w={213} />
          <Stroke w={17} h={10} d="M1 9l7.500-7.500L16 9" color="#1b1b1b" />
          <Spacer $w={31} />
          <TrayStack><Line $ls={-0.5}>ENG</Line><Line $ls={-0.3}>IN</Line></TrayStack>
          <Status><Wifi /><Speaker /><Battery /></Status>
          <Push />
          <TrayStack $align="flex-end"><Line $ls={-0.8}>14:28</Line><Line $ls={-0.43}>29-11-2024</Line></TrayStack>
          <Spacer $w={13} />
          <Bell />
        </Tray>
      </Taskbar>
    </Screen>
  );
}
